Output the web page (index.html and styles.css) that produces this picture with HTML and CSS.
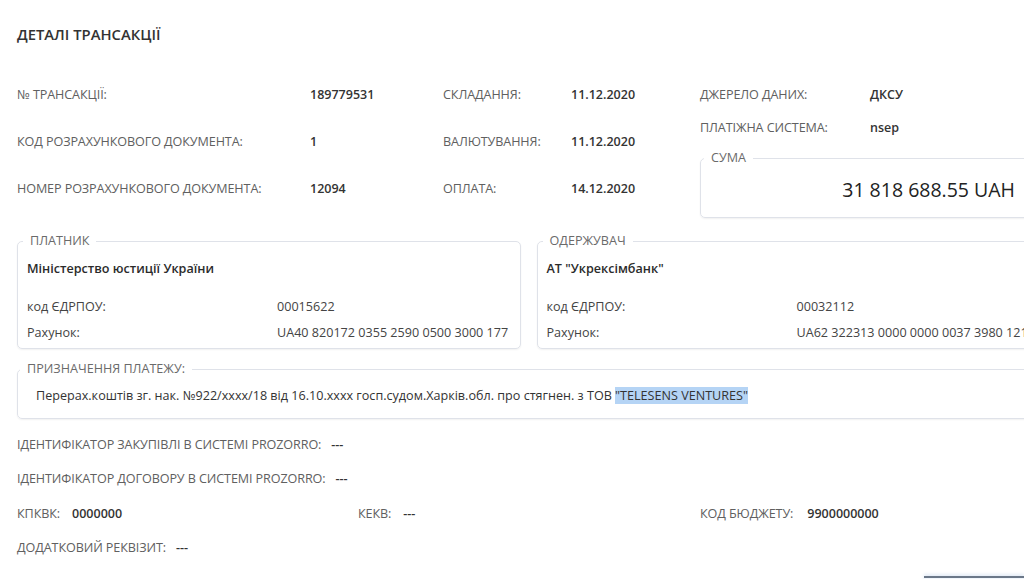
FILE: index.html
```html
<!DOCTYPE html>
<html lang="uk">
<head>
    <meta charset="UTF-8">
    <meta name="viewport" content="width=device-width, initial-scale=1.0">
    <title>Деталі трансакції</title>
    <link rel="stylesheet" href="styles.css">
</head>
<body>

<div class="page">
    <h1 class="title">ДЕТАЛІ ТРАНСАКЦІЇ</h1>

    <div class="summary">
        <div class="summary-grid">
            <span class="label">№ ТРАНСАКЦІЇ:</span>
            <span class="value">189779531</span>
            <span class="label">СКЛАДАННЯ:</span>
            <span class="value">11.12.2020</span>

            <span class="label">КОД РОЗРАХУНКОВОГО ДОКУМЕНТА:</span>
            <span class="value">1</span>
            <span class="label">ВАЛЮТУВАННЯ:</span>
            <span class="value">11.12.2020</span>

            <span class="label">НОМЕР РОЗРАХУНКОВОГО ДОКУМЕНТА:</span>
            <span class="value">12094</span>
            <span class="label">ОПЛАТА:</span>
            <span class="value">14.12.2020</span>
        </div>

        <div class="summary-side">
            <div class="side-row">
                <span class="label">ДЖЕРЕЛО ДАНИХ:</span>
                <span class="value">ДКСУ</span>
            </div>
            <div class="side-row">
                <span class="label">ПЛАТІЖНА СИСТЕМА:</span>
                <span class="value">nsep</span>
            </div>
            <fieldset class="box amount-box">
                <legend>СУМА</legend>
                <div class="amount">31 818 688.55 UAH</div>
            </fieldset>
        </div>
    </div>

    <div class="parties">
        <fieldset class="box party">
            <legend>ПЛАТНИК</legend>
            <div class="party-name">Міністерство юстиції України</div>
            <div class="party-row"><span>код ЄДРПОУ:</span><span>00015622</span></div>
            <div class="party-row"><span>Рахунок:</span><span>UA40 820172 0355 2590 0500 3000 177</span></div>
        </fieldset>
        <fieldset class="box party">
            <legend>ОДЕРЖУВАЧ</legend>
            <div class="party-name">АТ "Укрексімбанк"</div>
            <div class="party-row"><span>код ЄДРПОУ:</span><span>00032112</span></div>
            <div class="party-row"><span>Рахунок:</span><span>UA62 322313 0000 0000 0037 3980 121</span></div>
        </fieldset>
    </div>

    <fieldset class="box purpose">
        <legend>ПРИЗНАЧЕННЯ ПЛАТЕЖУ:</legend>
        <p>Перерах.коштів зг. нак. №922/xxxx/18 від 16.10.xxxx госп.судом.Харків.обл. про стягнен. з ТОВ <mark>"TELESENS VENTURES"</mark></p>
    </fieldset>

    <div class="extra">
        <div class="extra-row">
            <span class="label">ІДЕНТИФІКАТОР ЗАКУПІВЛІ В СИСТЕМІ PROZORRO:</span>
            <span class="value">---</span>
        </div>
        <div class="extra-row">
            <span class="label">ІДЕНТИФІКАТОР ДОГОВОРУ В СИСТЕМІ PROZORRO:</span>
            <span class="value">---</span>
        </div>
        <div class="extra-row codes">
            <div class="code"><span class="label">КПКВК:</span><span class="value">0000000</span></div>
            <div class="code"><span class="label">КЕКВ:</span><span class="value">---</span></div>
            <div class="code"><span class="label">КОД БЮДЖЕТУ:</span><span class="value">9900000000</span></div>
        </div>
        <div class="extra-row">
            <span class="label">ДОДАТКОВИЙ РЕКВІЗИТ:</span>
            <span class="value">---</span>
        </div>
    </div>

    <div class="actions">
        <button class="btn" type="button"></button>
    </div>
</div>

</body>
</html>
```

FILE: styles.css
```css
body {
    font-family: 'Open Sans', 'Noto Sans', sans-serif;
    margin: 0;
    background: #ffffff;
    color: #333333;
    overflow: hidden;
}
.page {
    width: 1025px;
    height: 579px;
    padding: 0 0 0 17px;
    overflow: hidden;
}
.title {
    margin: 24px 0 0;
    font-size: 14.8px;
    line-height: 20px;
    font-weight: 600;
    color: #333;
}
.label {
    font-size: 12.6px;
    color: #606060;
    letter-spacing: -0.1px;
}
.value {
    font-size: 12.5px;
    font-weight: 600;
    color: #333;
}

/* top block */
.summary {
    display: flex;
    margin-top: 27px;
}
.summary-grid {
    display: grid;
    grid-template-columns: 293px 133px 128px 129px;
    grid-auto-rows: 47px;
    align-items: center;
}
.summary-side {
    flex: 1;
    padding-top: 7px;
}
.side-row {
    display: flex;
    align-items: center;
    height: 33px;
}
.side-row .label {
    width: 170px;
}

/* boxes */
.box {
    margin: 0;
    border: 1px solid #dfe2e9;
    border-radius: 5px;
    box-shadow: 0 1px 2px rgba(0, 0, 0, 0.06);
    min-width: 0;
}
.box legend {
    font-size: 12.6px;
    line-height: 16px;
    color: #6a6a6a;
    padding: 0 7px;
    margin-left: -4px;
}
.amount-box {
    margin-top: 8px;
    padding: 13px 26px 5px 7px;
    height: 46px;
    box-sizing: content-box;
}
.amount-box legend {
    line-height: 12px;
}
.amount {
    text-align: right;
    font-size: 19.5px;
    line-height: 26px;
    color: #222;
}

.parties {
    display: flex;
    gap: 16px;
    margin-top: 15px;
}
.party {
    width: 504px;
    box-sizing: border-box;
    padding: 11px 9px 2px;
    font-size: 12.6px;
}
.party + .party {
    width: 506px;
}
.party-name {
    font-weight: 600;
    line-height: 18px;
    margin-bottom: 16px;
    color: #2b2b2b;
}
.party-row {
    display: grid;
    grid-template-columns: 250px 1fr;
    line-height: 26px;
    color: #444;
    white-space: nowrap;
}

.purpose {
    margin-top: 12px;
    padding: 10px 18px 13px;
}
.purpose legend {
    margin-left: -16px;
}
.purpose p {
    margin: 0;
    font-size: 12.6px;
    line-height: 18px;
    color: #333;
}
.purpose mark {
    background: #b5d4f5;
    color: #333;
}

.extra {
    margin-top: 8px;
}
.extra-row {
    display: flex;
    align-items: center;
    gap: 10px;
    height: 34.5px;
}
.codes {
    gap: 0;
}
.code {
    display: flex;
    gap: 12px;
}
.code:nth-child(1) {
    width: 341px;
}
.code:nth-child(2) {
    width: 342px;
}
.code:nth-child(3) {
    gap: 14px;
}

.actions {
    display: flex;
    justify-content: flex-end;
    margin-top: 11px;
}
.btn {
    width: 100px;
    height: 30px;
    margin-right: 18px;
    border: none;
    border-top: 2px solid #6b7889;
    background: #f1f6fc;
    box-shadow: 0 -2px 3px rgba(120, 160, 210, 0.2);
}
```
